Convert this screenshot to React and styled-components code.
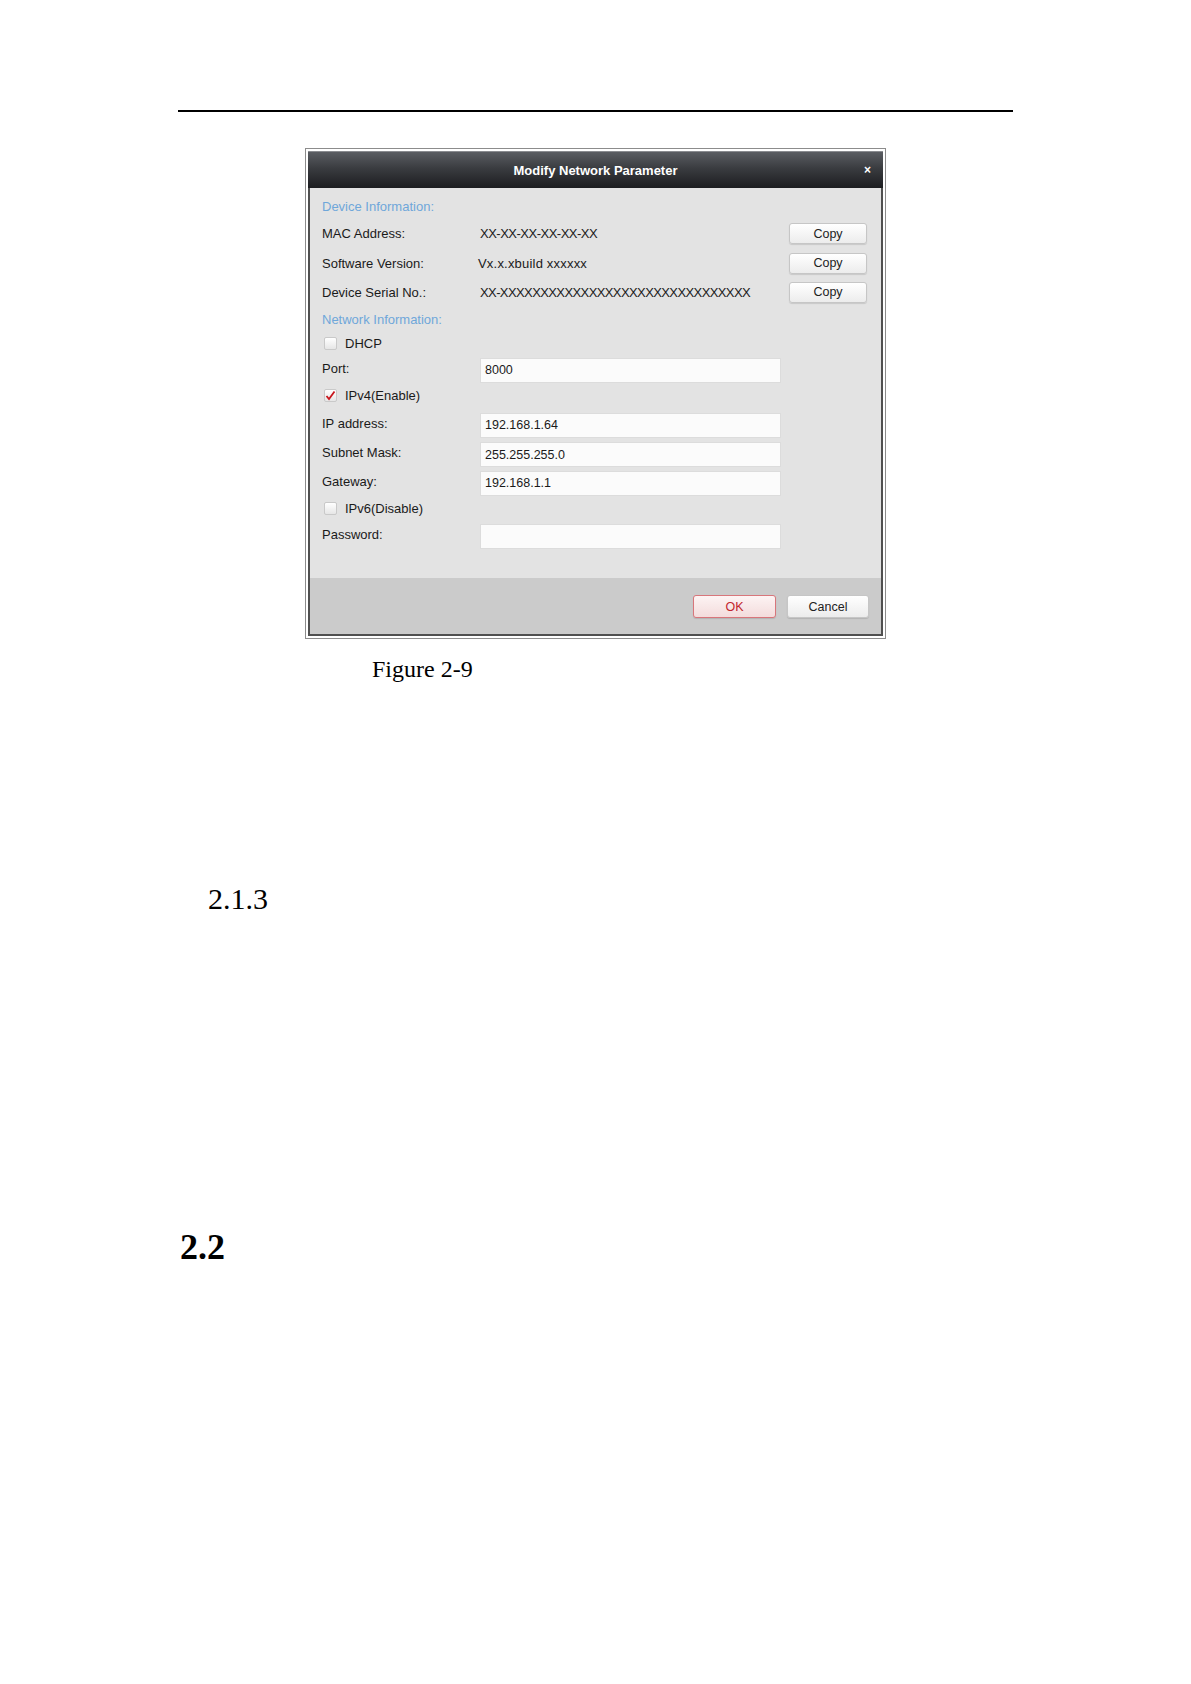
import React from 'react'
import styled, { createGlobalStyle } from 'styled-components'

const GlobalStyle = createGlobalStyle`
  html, body {
    margin: 0;
    padding: 0;
    background: #fff;
  }
`

const Page = styled.div`
  width: 1191px;
  min-height: 1684px;
  padding-top: 110px;
  box-sizing: border-box;
  font-family: "Liberation Serif", "Times New Roman", serif;
  color: #000;
`

const HeaderRule = styled.div`
  margin-left: 178px;
  width: 835px;
  border-top: 2px solid #000;
`

const Frame = styled.div`
  margin: 36px 0 0 305px;
  width: 581px;
  box-sizing: border-box;
  border: 1px solid #8c8c8c;
  padding: 2px;
  background: #fff;
`

const Dialog = styled.div`
  border: 2px solid #505050;
  border-top: none;
  font-family: "Liberation Sans", Arial, sans-serif;
  font-size: 13px;
  color: #1a1a1a;
`

const TitleBar = styled.div`
  height: 37px;
  display: grid;
  grid-template-columns: 1fr auto 1fr;
  align-items: center;
  background: linear-gradient(#5a5d62 0%, #3a3c40 45%, #1c1d20 100%);
  border-top: 1px solid #8a8c90;
  box-sizing: border-box;
  margin: 0 -2px;
  padding: 0 12px;
`

const Title = styled.div`
  grid-column: 2;
  color: #fff;
  font-weight: bold;
  font-size: 13px;
`

const Close = styled.div`
  justify-self: end;
  color: #fff;
  font-weight: bold;
  font-size: 12px;
`

const Body = styled.div`
  background: #e3e3e3;
  padding: 6px 14px 30px 12px;
  display: flex;
  flex-direction: column;
`

const Row = styled.div`
  height: ${p => p.h}px;
  display: flex;
  align-items: center;
`

const Section = styled(Row)`
  color: #6fa7da;
`

const Label = styled.div`
  width: 158px;
  flex: none;
`

const Value = styled.div`
  flex: 1;
  letter-spacing: ${p => p.spacing ?? -0.5}px;
  margin-left: ${p => p.shift || 0}px;
`

const Field = styled.div`
  width: 301px;
  height: 25px;
  margin-top: 4px;
  box-sizing: border-box;
  background: #fbfbfb;
  border: 1px solid #dcdcdc;
  padding-left: 4px;
  display: flex;
  align-items: center;
  font-size: 12.5px;
`

const Btn = styled.div`
  height: ${p => p.h || 21}px;
  width: ${p => p.w}px;
  box-sizing: border-box;
  display: flex;
  align-items: center;
  justify-content: center;
  border-radius: 3px;
  border: 1px solid ${p => (p.primary ? '#d8767b' : '#c6c6c6')};
  background: ${p =>
    p.primary
      ? 'linear-gradient(#fdf3f3, #f3dcdc)'
      : 'linear-gradient(#ffffff, #ececec)'};
  color: ${p => (p.primary ? '#c2262c' : '#222')};
  box-shadow: 0 1px 1px rgba(0, 0, 0, 0.12);
  font-size: 12.5px;
`

const CheckRow = styled(Row)`
  padding-left: 2px;
  gap: 8px;
`

const Box = styled.span`
  width: 13px;
  height: 13px;
  box-sizing: border-box;
  border: 1px solid #c9c9c9;
  border-radius: 2px;
  background: linear-gradient(#ffffff, #e6e6e6);
  display: flex;
  align-items: center;
  justify-content: center;
`

const Footer = styled.div`
  height: 56px;
  box-sizing: border-box;
  background: #cbcbcb;
  padding: 17px 12px 0 0;
  display: flex;
  justify-content: flex-end;
  align-items: flex-start;
  gap: 11px;
`

const Caption = styled.div`
  margin: 18px 0 0 372px;
  font-size: 24px;
  line-height: 1;
`

const SubHeading = styled.div`
  margin: 203px 0 0 208px;
  font-size: 30px;
  line-height: 1;
`

const Heading = styled.div`
  margin: 315px 0 0 180px;
  font-size: 36px;
  font-weight: bold;
  line-height: 1;
`

const Check = ({ on }) => (
  <Box>
    {on && (
      <svg width="11" height="11" viewBox="0 0 11 11">
        <path d="M1.5 6 L4 9 L9.5 1.5" fill="none" stroke="#c8161d" strokeWidth="1.8" />
      </svg>
    )}
  </Box>
)

const serial = 'XX-' + 'X'.repeat(31)

export default function App() {
  return (
    <Page>
      <GlobalStyle />
      <HeaderRule />
      <Frame>
        <Dialog>
          <TitleBar>
            <Title>Modify Network Parameter</Title>
            <Close>×</Close>
          </TitleBar>
          <Body>
            <Section h={25}>Device Information:</Section>
            <Row h={29}>
              <Label>MAC Address:</Label>
              <Value>XX-XX-XX-XX-XX-XX</Value>
              <Btn w={78}>Copy</Btn>
            </Row>
            <Row h={30}>
              <Label>Software Version:</Label>
              <Value spacing={0.2} shift={-2}>Vx.x.xbuild xxxxxx</Value>
              <Btn w={78}>Copy</Btn>
            </Row>
            <Row h={28}>
              <Label>Device Serial No.:</Label>
              <Value spacing={-0.6}>{serial}</Value>
              <Btn w={78}>Copy</Btn>
            </Row>
            <Section h={26}>Network Information:</Section>
            <CheckRow h={22}>
              <Check />
              DHCP
            </CheckRow>
            <Row h={28}>
              <Label>Port:</Label>
              <Field>8000</Field>
            </Row>
            <CheckRow h={26}>
              <Check on />
              IPv4(Enable)
            </CheckRow>
            <Row h={30}>
              <Label>IP address:</Label>
              <Field>192.168.1.64</Field>
            </Row>
            <Row h={29}>
              <Label>Subnet Mask:</Label>
              <Field>255.255.255.0</Field>
            </Row>
            <Row h={28}>
              <Label>Gateway:</Label>
              <Field>192.168.1.1</Field>
            </Row>
            <CheckRow h={26}>
              <Check />
              IPv6(Disable)
            </CheckRow>
            <Row h={27}>
              <Label>Password:</Label>
              <Field />
            </Row>
          </Body>
          <Footer>
            <Btn w={83} h={23} primary>OK</Btn>
            <Btn w={82} h={23}>Cancel</Btn>
          </Footer>
        </Dialog>
      </Frame>
      <Caption>Figure 2-9</Caption>
      <SubHeading>2.1.3</SubHeading>
      <Heading>2.2</Heading>
    </Page>
  )
}
